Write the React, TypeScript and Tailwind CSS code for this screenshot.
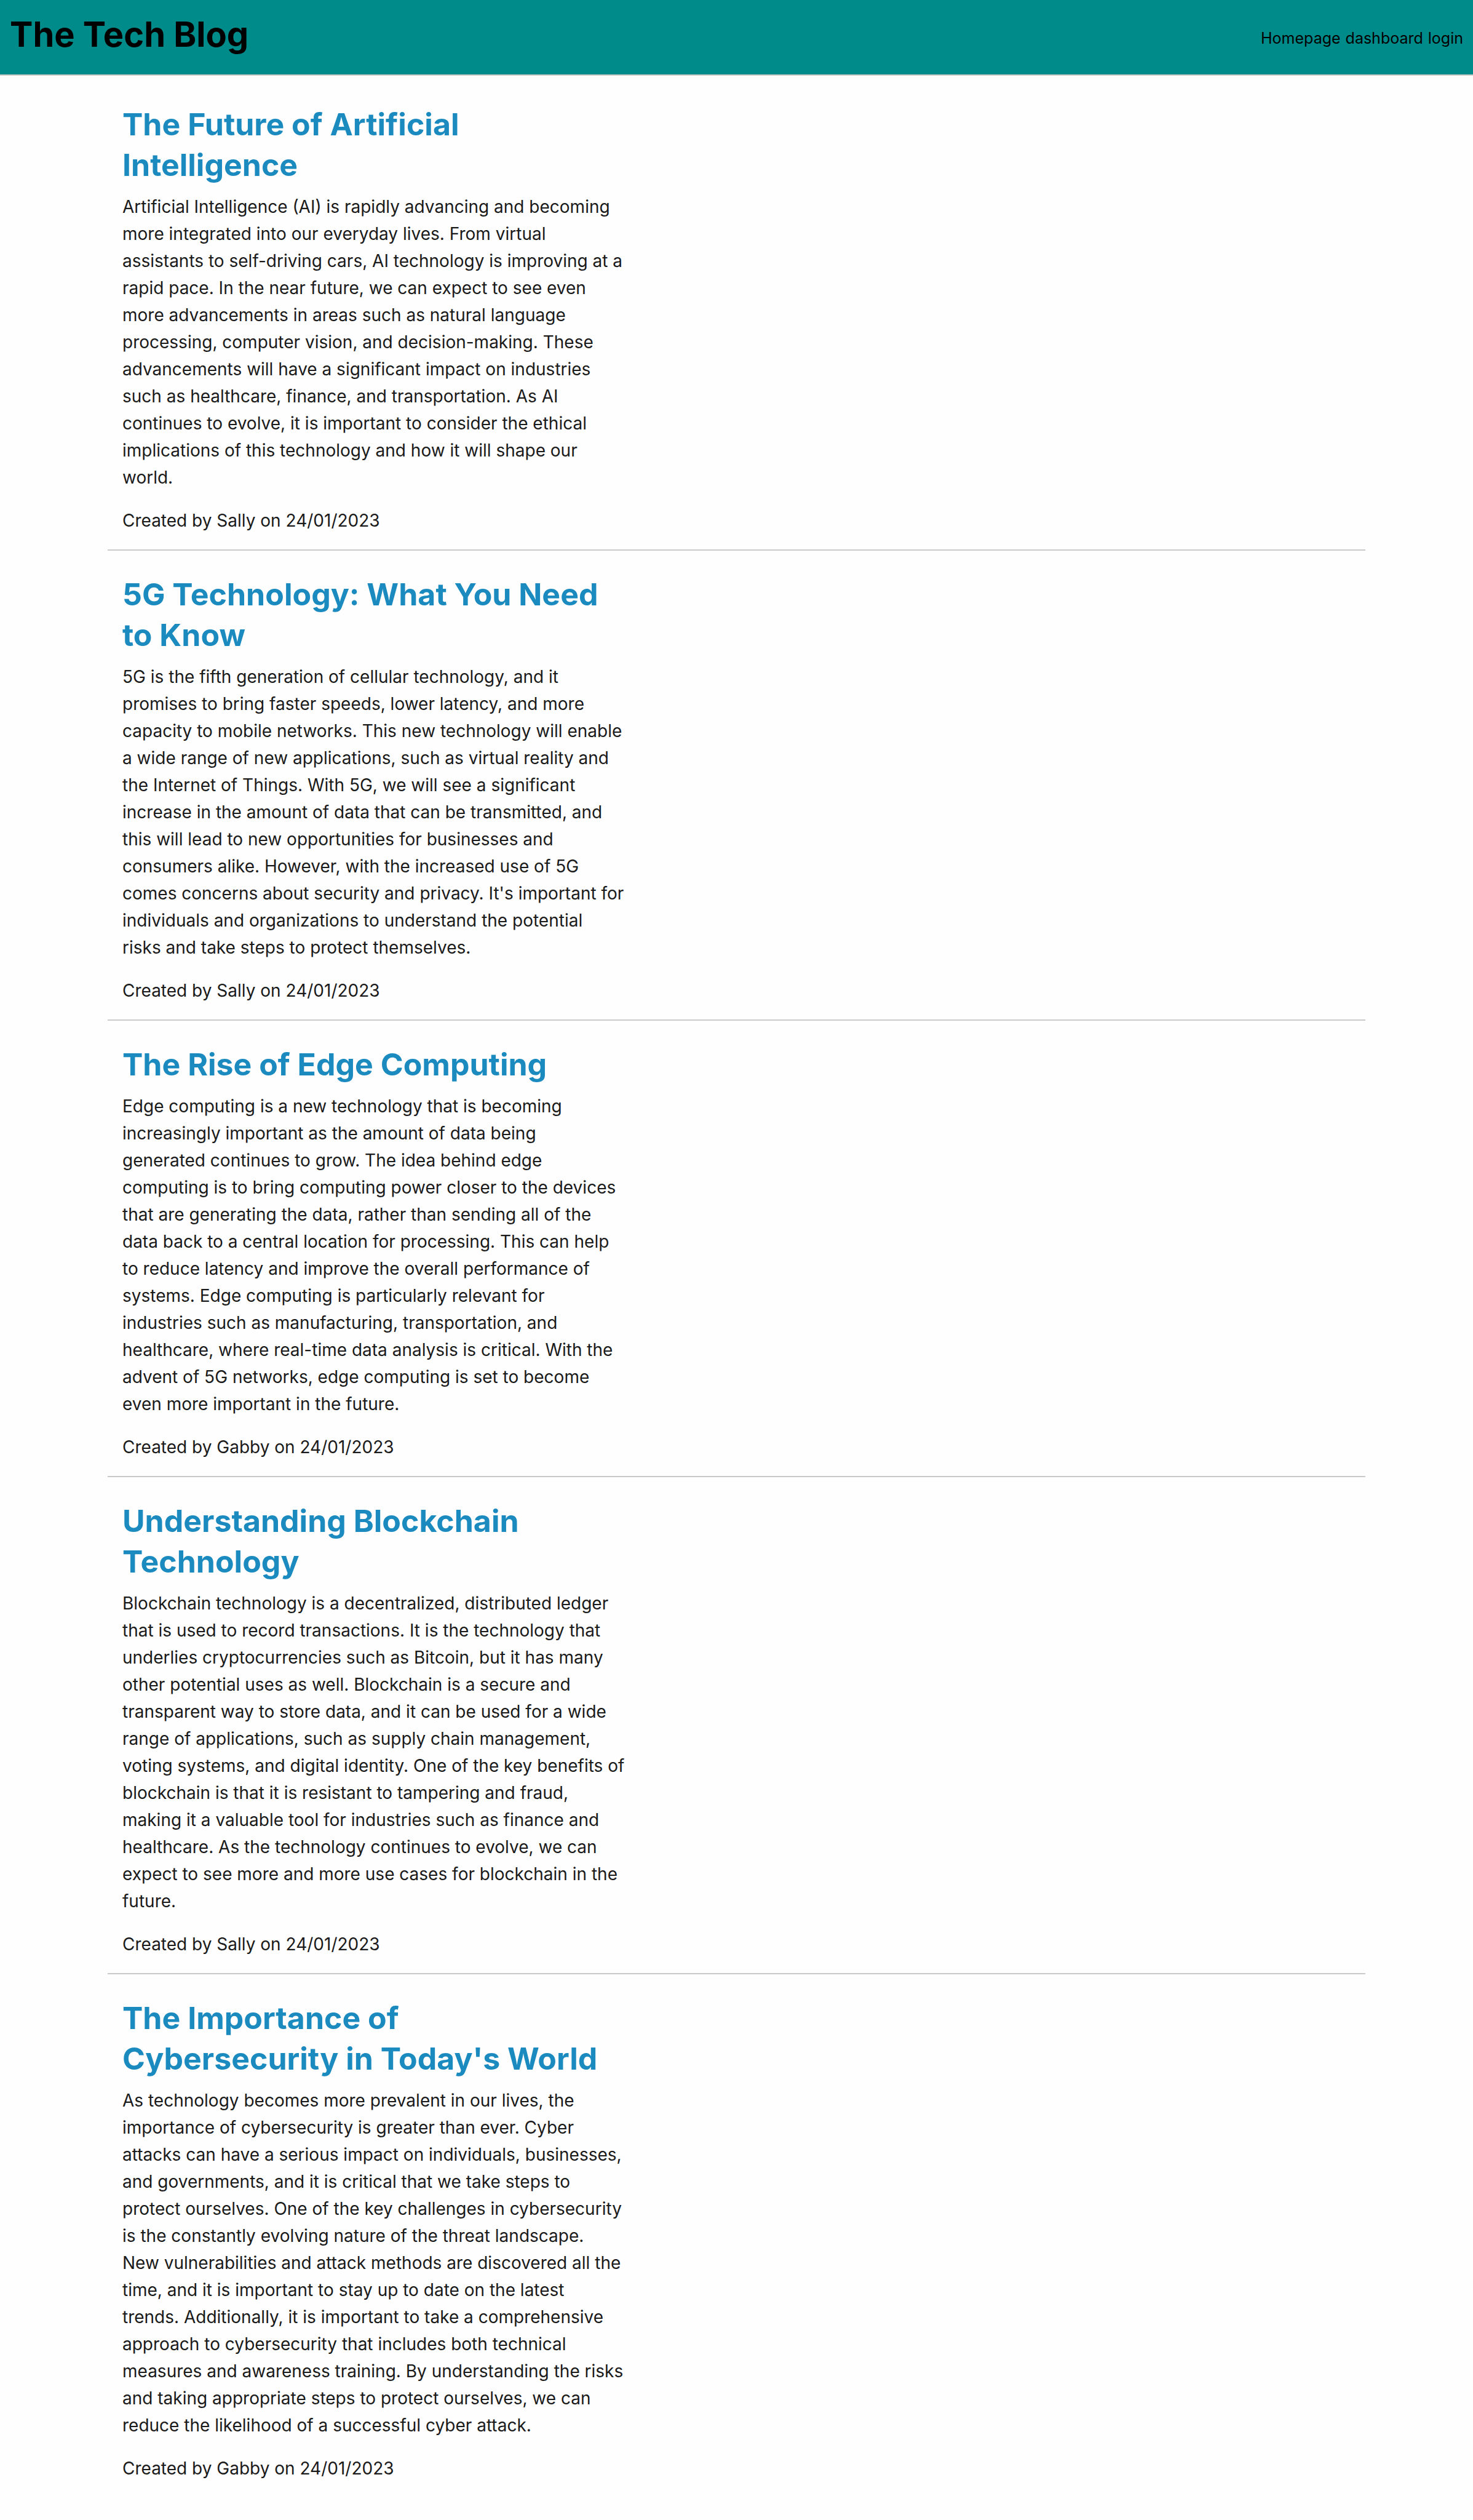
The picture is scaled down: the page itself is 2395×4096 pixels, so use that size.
const posts = [
  {
    title: "The Future of Artificial\nIntelligence",
    body: "Artificial Intelligence (AI) is rapidly advancing and becoming\nmore integrated into our everyday lives. From virtual\nassistants to self-driving cars, AI technology is improving at a\nrapid pace. In the near future, we can expect to see even\nmore advancements in areas such as natural language\nprocessing, computer vision, and decision-making. These\nadvancements will have a significant impact on industries\nsuch as healthcare, finance, and transportation. As AI\ncontinues to evolve, it is important to consider the ethical\nimplications of this technology and how it will shape our\nworld.",
    author: "Sally",
    date: "24/01/2023",
  },
  {
    title: "5G Technology: What You Need\nto Know",
    body: "5G is the fifth generation of cellular technology, and it\npromises to bring faster speeds, lower latency, and more\ncapacity to mobile networks. This new technology will enable\na wide range of new applications, such as virtual reality and\nthe Internet of Things. With 5G, we will see a significant\nincrease in the amount of data that can be transmitted, and\nthis will lead to new opportunities for businesses and\nconsumers alike. However, with the increased use of 5G\ncomes concerns about security and privacy. It's important for\nindividuals and organizations to understand the potential\nrisks and take steps to protect themselves.",
    author: "Sally",
    date: "24/01/2023",
  },
  {
    title: "The Rise of Edge Computing",
    body: "Edge computing is a new technology that is becoming\nincreasingly important as the amount of data being\ngenerated continues to grow. The idea behind edge\ncomputing is to bring computing power closer to the devices\nthat are generating the data, rather than sending all of the\ndata back to a central location for processing. This can help\nto reduce latency and improve the overall performance of\nsystems. Edge computing is particularly relevant for\nindustries such as manufacturing, transportation, and\nhealthcare, where real-time data analysis is critical. With the\nadvent of 5G networks, edge computing is set to become\neven more important in the future.",
    author: "Gabby",
    date: "24/01/2023",
  },
  {
    title: "Understanding Blockchain\nTechnology",
    body: "Blockchain technology is a decentralized, distributed ledger\nthat is used to record transactions. It is the technology that\nunderlies cryptocurrencies such as Bitcoin, but it has many\nother potential uses as well. Blockchain is a secure and\ntransparent way to store data, and it can be used for a wide\nrange of applications, such as supply chain management,\nvoting systems, and digital identity. One of the key benefits of\nblockchain is that it is resistant to tampering and fraud,\nmaking it a valuable tool for industries such as finance and\nhealthcare. As the technology continues to evolve, we can\nexpect to see more and more use cases for blockchain in the\nfuture.",
    author: "Sally",
    date: "24/01/2023",
  },
  {
    title: "The Importance of\nCybersecurity in Today's World",
    body: "As technology becomes more prevalent in our lives, the\nimportance of cybersecurity is greater than ever. Cyber\nattacks can have a serious impact on individuals, businesses,\nand governments, and it is critical that we take steps to\nprotect ourselves. One of the key challenges in cybersecurity\nis the constantly evolving nature of the threat landscape.\nNew vulnerabilities and attack methods are discovered all the\ntime, and it is important to stay up to date on the latest\ntrends. Additionally, it is important to take a comprehensive\napproach to cybersecurity that includes both technical\nmeasures and awareness training. By understanding the risks\nand taking appropriate steps to protect ourselves, we can\nreduce the likelihood of a successful cyber attack.",
    author: "Gabby",
    date: "24/01/2023",
  },
];

type Post = (typeof posts)[number];

function PostEntry({ post }: { post: Post }) {
  return (
    <article className="border-b-2 border-[#cacaca] px-6 pt-[38px] pb-[25px] last:border-b-0">
      <h2 className="whitespace-pre text-[50px] leading-[66px] font-bold text-[#1b8abf]">
        <a href="#">{post.title}</a>
      </h2>
      <p className="mt-[13px] whitespace-pre">{post.body}</p>
      <p className="mt-[26px]">
        Created by {post.author} on {post.date}
      </p>
    </article>
  );
}

export default function App() {
  return (
    <div className="min-h-screen bg-[#fefefe] font-['Inter',sans-serif] text-[28px] leading-[44px] text-[#1a1a1a]">
      <header className="flex items-center justify-between border-b-2 border-[#cacaca] bg-[#008b8b] px-4 pt-[19px] pb-[28px] text-black">
        <h1 className="text-[56px] leading-[74px] font-bold">The Tech Blog</h1>
        <nav className="flex gap-2 pt-3 text-[25px]">
          <a href="#">Homepage</a>
          <a href="#">dashboard</a>
          <a href="#">login</a>
        </nav>
      </header>
      <main className="mx-auto w-full max-w-[2045px] pt-2">
        {posts.map((post) => (
          <PostEntry key={post.title} post={post} />
        ))}
      </main>
    </div>
  );
}
